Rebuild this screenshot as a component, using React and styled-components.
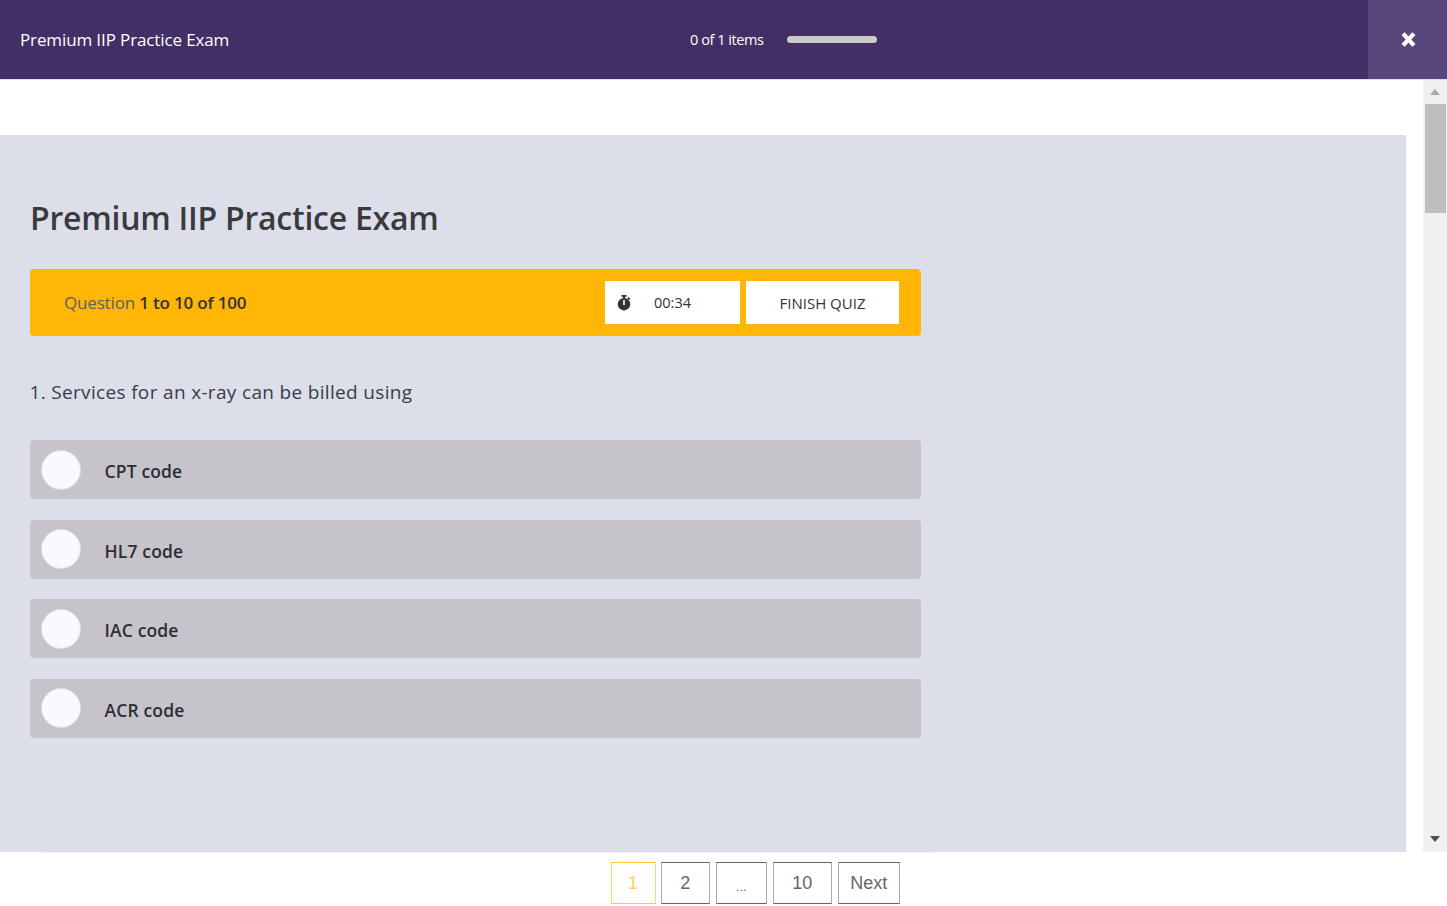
import React from "react";
import styled, { createGlobalStyle } from "styled-components";

const Global = createGlobalStyle`
  html, body { margin: 0; padding: 0; height: 100%; overflow: hidden; background: #fff; }
  * { box-sizing: border-box; }
`;
const Page = styled.div`
  width: 1447px; height: 906px; display: flex; flex-direction: column; overflow: hidden;
  font-family: "Open Sans", "Noto Sans", sans-serif; background: #fff;
`;
const Header = styled.header`
  height: 80px; flex: none; display: flex; align-items: stretch; background: #432f66;
  border-bottom: 1px solid #dbdff0;
`;
const CourseTitle = styled.div`
  width: 690px; padding-left: 20px; display: flex; align-items: center; color: #fff; font-size: 17px; letter-spacing: -0.12px;
`;
const Progress = styled.div`
  flex: 1; display: flex; align-items: center; gap: 23.5px; color: #fff; font-size: 14.5px; letter-spacing: -0.45px;
`;
const ProgressBar = styled.div`
  width: 90px; height: 7px; border-radius: 4px; background: #cbcbcb;
`;
const CloseButton = styled.button`
  width: 79px; border: 0; padding: 0 0 0 1px; background: #58457a; display: flex; align-items: center; justify-content: center;
`;
const Body = styled.div`
  flex: 1; min-height: 0; display: flex;
`;
const Scroller = styled.main`
  width: 1406px; padding-top: 55px; display: flex;
`;
const Panel = styled.div`
  flex: 1; background: #dcdee9; padding: 59px 485px 0 30px;
`;
const Heading = styled.h1`
  margin: 0 0 27px; height: 48px; line-height: 48px; font-size: 32px; font-weight: 600; color: #3a3a3e; letter-spacing: -0.25px;
`;
const QuestionBar = styled.div`
  height: 67px; border-radius: 4px; background: #ffb607; display: flex; align-items: center; padding: 0 22px 0 34px;
`;
const Count = styled.div`
  flex: 1; font-size: 17px; color: #5f5f66; letter-spacing: -0.17px;
  b { font-weight: 600; color: #333; }
`;
const Timer = styled.div`
  width: 135px; height: 43px; background: #fff; display: flex; align-items: center; padding-left: 12px;
  color: #333; font-size: 14.5px;
  span { margin-left: 23px; }
`;
const FinishButton = styled.button`
  width: 153px; height: 43px; margin-left: 6px; border: 0; background: #fff; color: #333;
  font: 400 15px "Open Sans", sans-serif;
`;
const QuestionText = styled.p`
  margin: 42px 0 34px; line-height: 28px; font-size: 19px; font-weight: 500; color: #3a3d46; letter-spacing: 0.33px;
  margin-left: -0.5px;
`;
const Options = styled.div`
  display: flex; flex-direction: column; gap: 20.6px;
`;
const Option = styled.label`
  height: 59px; border-radius: 4px; background: #c6c3ca; display: flex; align-items: center; padding-left: 11px;
  font-size: 17.5px; font-weight: 600; color: #2c2e35; letter-spacing: 0.15px;
`;
const Radio = styled.span`
  width: 40px; height: 40px; border-radius: 50%; background: #f9fafe; border: 1px solid #dbdff0; margin-right: 23.5px; flex: none;
`;
const OptionText = styled.span`
  position: relative; top: 1.5px;
`;
const Track = styled.div`
  width: 24px; margin-left: 17px; background: #f0f0f0; display: flex; flex-direction: column; align-items: center;
`;
const ArrowUp = styled.div`
  width: 0; height: 0; margin-top: 9px; border: 5.5px solid transparent; border-top: 0; border-bottom: 6px solid #a9a9a9;
`;
const Thumb = styled.div`
  width: 21px; height: 109px; margin-top: 9px; background: #bebebe;
`;
const ArrowDown = styled.div`
  width: 0; height: 0; margin-top: auto; margin-bottom: 10px; border: 5.5px solid transparent; border-bottom: 0; border-top: 6px solid #505050;
`;
const Footer = styled.footer`
  height: 54px; flex: none; display: flex; flex-direction: column;
`;
const FooterRule = styled.div`
  width: 890px; height: 1px; margin-left: 43px; background: #eeeef0;
`;
const Pagination = styled.nav`
  display: flex; margin: 9px 0 0 610.5px; font-family: "Liberation Sans", Arial, sans-serif;
`;
const PageLink = styled.a`
  width: ${p => p.$w}px; margin-right: ${p => p.$gap}px; height: 42px; display: flex; align-items: center; justify-content: center;
  font-size: ${p => p.$small ? 13 : 18}px;
  color: ${p => p.$active ? "#ffcf66" : "#666"};
  border: 1px solid ${p => p.$active ? "#ffc53d" : "#666"};
  border-left-color: ${p => p.$active ? "#ffd67a" : "#aaa"};
  border-right-color: ${p => p.$active ? "#ffd67a" : "#aaa"};
  padding-top: ${p => p.$small ? 6 : 0}px;
`;

const Stopwatch = () => (
  <svg width="14" height="16" viewBox="0 0 14 16" aria-hidden="true">
    <rect x="4.5" y="0" width="5" height="1.8" fill="#333" />
    <rect x="6" y="1" width="2" height="2.5" fill="#333" />
    <rect x="10.6" y="2.6" width="2.4" height="1.8" fill="#333" transform="rotate(40 11.8 3.5)" />
    <circle cx="7" cy="9.2" r="6.2" fill="#333" />
    <rect x="6.2" y="5" width="1.6" height="5" fill="#fff" />
  </svg>
);
const CloseIcon = () => (
  <svg width="15" height="15" viewBox="0 0 14 14" aria-hidden="true">
    <path d="M2 1.5L12 12.5M12 1.5L2 12.5" stroke="#fff" strokeWidth="4" />
  </svg>
);

const options = ["CPT code", "HL7 code", "IAC code", "ACR code"];
const pages = [
  { t: "1", w: 45, gap: 5.5, active: true },
  { t: "2", w: 48.5, gap: 6.5 },
  { t: "...", w: 50.5, gap: 6.5, small: true },
  { t: "10", w: 58.5, gap: 6.5 },
  { t: "Next", w: 61.5, gap: 0 },
];

export default function App() {
  return (
    <Page>
      <Global />
      <Header>
        <CourseTitle>Premium IIP Practice Exam</CourseTitle>
        <Progress>
          <span>0 of 1 items</span>
          <ProgressBar />
        </Progress>
        <CloseButton aria-label="Close"><CloseIcon /></CloseButton>
      </Header>
      <Body>
        <Scroller>
          <Panel>
            <Heading>Premium IIP Practice Exam</Heading>
            <QuestionBar>
              <Count>Question <b>1 to 10 of 100</b></Count>
              <Timer><Stopwatch /><span>00:34</span></Timer>
              <FinishButton>FINISH QUIZ</FinishButton>
            </QuestionBar>
            <QuestionText>1. Services for an x-ray can be billed using</QuestionText>
            <Options>
              {options.map(o => (
                <Option key={o}><Radio /><OptionText>{o}</OptionText></Option>
              ))}
            </Options>
          </Panel>
        </Scroller>
        <Track>
          <ArrowUp />
          <Thumb />
          <ArrowDown />
        </Track>
      </Body>
      <Footer>
        <FooterRule />
        <Pagination>
          {pages.map(p => (
            <PageLink key={p.t} $w={p.w} $gap={p.gap} $active={p.active} $small={p.small}>{p.t}</PageLink>
          ))}
        </Pagination>
      </Footer>
    </Page>
  );
}
